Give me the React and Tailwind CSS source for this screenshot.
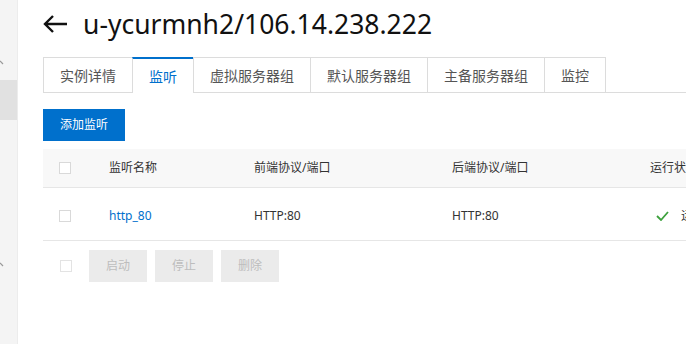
import React from 'react';

const tabs = ['实例详情', '监听', '虚拟服务器组', '默认服务器组', '主备服务器组', '监控'];

const Checkbox = ({ faded }) => (
  <span className={`block w-[12px] h-[12px] border bg-white ${faded ? 'border-[#e3e3e3]' : 'border-[#d9d9d9]'}`}></span>
);

// 侧边栏上露出的小折叠箭头
const Caret = () => (
  <svg width="5" height="6" viewBox="0 0 5 6">
    <path d="M0 1 L3 4" fill="none" stroke="#999" strokeWidth="1.2" />
  </svg>
);

const App = () => {
  return (
    <div
      className="w-[686px] h-[344px] overflow-hidden flex bg-white text-[#333]"
      style={{ fontFamily: '"Noto Sans", "Noto Sans CJK SC", sans-serif' }}
    >
      {/* 侧边栏 */}
      <div className="w-[18px] shrink-0 bg-[#f4f4f4] border-r border-[#ececec] flex flex-col">
        <div className="h-[80px] pt-[60px]">
          <Caret />
        </div>
        <div className="h-[40px] bg-[#e1e1e1]"></div>
        <div className="flex-1 pt-[142px]">
          <Caret />
        </div>
      </div>

      {/* 主区域 */}
      <div className="flex-1 pl-[25px] pt-[6px] min-w-0">
        {/* 标题 */}
        <div className="flex items-center h-[36px]">
          <svg width="25" height="20" viewBox="0 0 25 20" className="mr-[15px]">
            <path d="M24 10 H2 M10 2 L2 10 L10 18" fill="none" stroke="#111" strokeWidth="2.4" />
          </svg>
          <h1 className="text-[26.5px] leading-none text-[#111] whitespace-nowrap">u-ycurmnh2/106.14.238.222</h1>
        </div>

        {/* 标签页 */}
        <div className="mt-[15px] flex border-b border-[#dcdcdc] w-[700px]">
          {tabs.map((t, i) => (
            <div
              key={t}
              className={`h-[35px] px-[16px] flex items-center text-[14px] whitespace-nowrap border-l border-t border-[#dcdcdc] ${
                i === tabs.length - 1 ? 'border-r' : ''
              } ${
                i === 1
                  ? 'text-[#0070cc] border-t-2 border-t-[#0070cc] bg-white -mb-px h-[36px]'
                  : 'text-[#555]'
              }`}
            >
              {t}
            </div>
          ))}
        </div>

        {/* 添加按钮 */}
        <button className="mt-[16px] h-[32px] px-[17px] bg-[#0070cc] text-white text-[12px]">添加监听</button>

        {/* 表格 */}
        <div className="mt-[8px] w-[700px] text-[12px]">
          <div className="grid grid-cols-[66px_145px_198px_198px_1fr] items-center h-[39px] bg-[#f8f8f8] border-b border-[#e6e6e6] text-[#333]">
            <div className="pl-[16px]"><Checkbox /></div>
            <div>监听名称</div>
            <div>前端协议/端口</div>
            <div>后端协议/端口</div>
            <div className="whitespace-nowrap">运行状态</div>
          </div>
          <div className="grid grid-cols-[66px_145px_198px_198px_1fr] items-center h-[53px] border-b border-[#e6e6e6] text-[#333] pt-[3px]">
            <div className="pl-[16px]"><Checkbox /></div>
            <div className="text-[#0070cc]">http_80</div>
            <div>HTTP:80</div>
            <div>HTTP:80</div>
            <div className="flex items-center gap-[12px] pl-[6px] whitespace-nowrap">
              <svg width="13" height="10" viewBox="0 0 13 10">
                <path d="M1 5 L5 9 L12 1" fill="none" stroke="#3da13d" strokeWidth="1.8" />
              </svg>
              <span>运行中</span>
            </div>
          </div>

          {/* 批量操作 */}
          <div className="flex items-center mt-[9px]">
            <div className="pl-[17px] pr-[17px]"><Checkbox faded /></div>
            <div className="flex gap-[8px]">
              {['启动', '停止', '删除'].map((b) => (
                <button key={b} className="w-[58px] h-[32px] bg-[#ebebeb] text-[#bdbdbd] text-[12px]">{b}</button>
              ))}
            </div>
          </div>
        </div>
      </div>
    </div>
  );
};

export default App;
